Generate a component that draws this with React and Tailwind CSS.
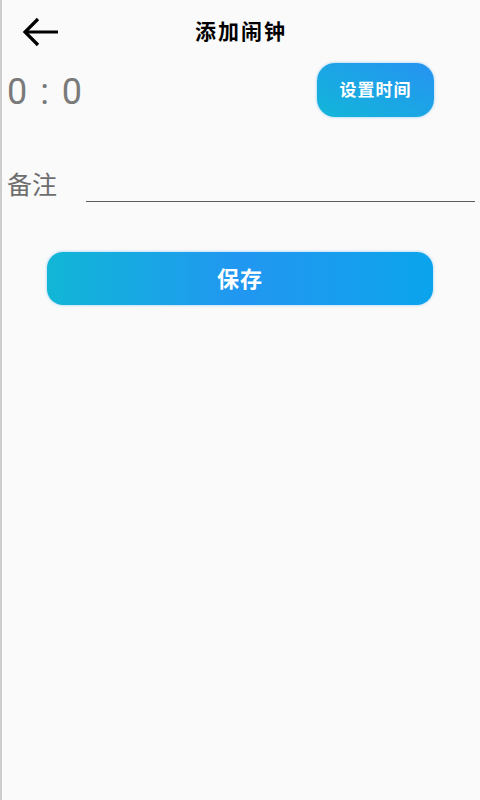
import React from "react";

const BackArrow = () => (
  <svg width="38" height="30" viewBox="0 0 38 30" fill="none">
    <path d="M3 15 H36" stroke="#000" strokeWidth="3.2" />
    <path d="M16 2 L3 15 L16 28" stroke="#000" strokeWidth="3.2" strokeLinecap="butt" strokeLinejoin="miter" />
  </svg>
);

const App = () => {
  return (
    <div
      className="w-[480px] h-[800px] bg-[#fafafa] border-l-2 border-[#cdcdcd] flex flex-col"
      style={{ fontFamily: '"Noto Sans", "Noto Sans CJK SC", sans-serif' }}
    >
      {/* header */}
      <div className="h-[63px] grid grid-cols-[78px_1fr_78px] items-center">
        <div className="flex justify-center">
          <BackArrow />
        </div>
        <h1 className="text-center text-[21px] font-bold text-black tracking-[2px]">添加闹钟</h1>
        <div />
      </div>

      {/* time row */}
      <div className="h-[54px] flex items-center justify-between pl-[5px] pr-[46px]">
        <span
          className="mt-[4px] text-[36px] text-[#7a7a7a] leading-none tracking-[2px]"
          style={{ fontFamily: "Roboto, sans-serif" }}
        >
          0 : 0
        </span>
        <button className="w-[117px] h-[54px] rounded-[18px] bg-linear-to-tr from-[#12b6d8] to-[#2692f2] text-white text-[17px] font-bold tracking-[1px] shadow-[0_0_3px_rgba(33,150,243,0.5)]">
          设置时间
        </button>
      </div>

      {/* note row */}
      <div className="mt-[55px] flex items-end pl-[5px] pr-[5px]">
        <span className="text-[25px] text-[#6e6e6e] leading-none mb-[5px]">备注</span>
        <div className="flex-1 ml-[29px] border-b border-[#5a5a5a] h-[30px]" />
      </div>

      {/* save */}
      <div className="mt-[50px] pl-[45px] pr-[47px]">
        <button className="w-full h-[53px] rounded-[16px] bg-linear-to-r from-[#12b6d6] via-[#2197f1] to-[#0aa4ec] text-white text-[22px] font-bold tracking-[1px] shadow-[0_0_3px_rgba(33,150,243,0.5)]">
          保存
        </button>
      </div>
    </div>
  );
};

export default App;
